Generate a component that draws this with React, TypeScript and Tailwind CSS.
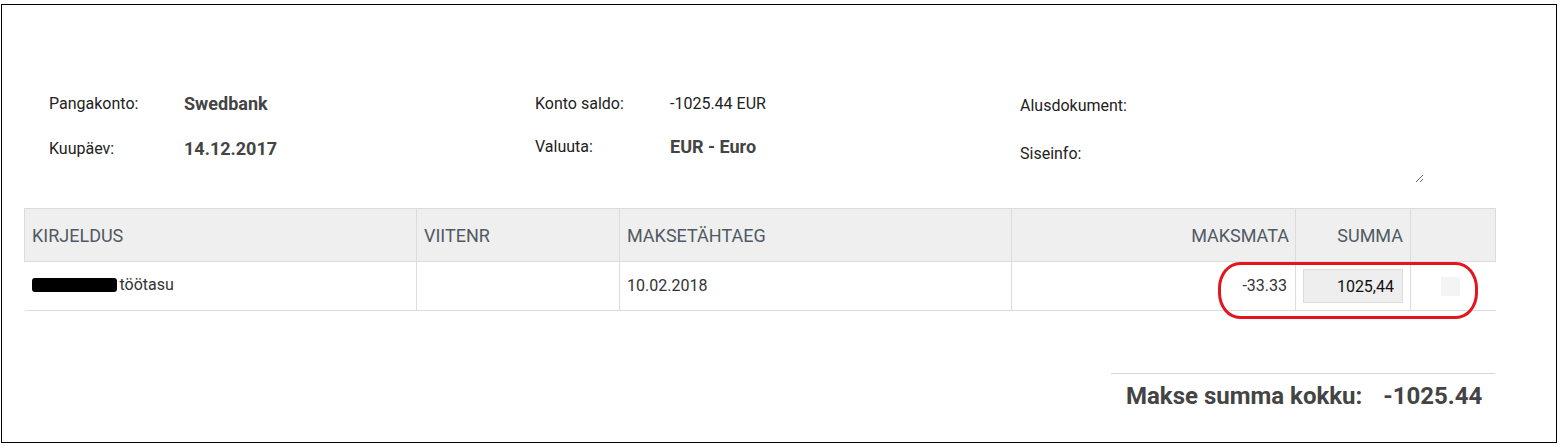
import React from "react";

const labelCls = "text-[16px] text-[#222] leading-6";

const InfoRow: React.FC<{ label: string; value?: string; light?: boolean }> = ({
  label,
  value,
  light,
}) => (
  <div className="grid grid-cols-[135px_1fr] items-center h-6">
    <span className={labelCls}>{label}</span>
    <span
      className={
        light
          ? "text-[16px] text-[#222] leading-6"
          : "text-[18px] font-bold text-[#444] leading-6"
      }
    >
      {value}
    </span>
  </div>
);

const App: React.FC = () => {
  return (
    <div className="pt-[4px] pl-[1px] bg-white font-['Roboto','Liberation_Sans',sans-serif]">
      <div className="relative w-[1556px] h-[439px] border border-black flex flex-col pt-[87px] pl-[22px]">
        {/* Info */}
        <div className="h-[116px] flex pl-[25px]">
          <div className="w-[486px] shrink-0 flex flex-col gap-[21px]">
            <InfoRow label="Pangakonto:" value="Swedbank" />
            <InfoRow label="Kuupäev:" value="14.12.2017" />
          </div>
          <div className="w-[485px] shrink-0 flex flex-col gap-[19px]">
            <InfoRow label="Konto saldo:" value="-1025.44 EUR" light />
            <InfoRow label="Valuuta:" value="EUR - Euro" />
          </div>
          <div className="w-[404px] shrink-0 flex flex-col pt-[2px]">
            <span className={labelCls}>Alusdokument:</span>
            <div className="flex mt-[24px]">
              <span className={labelCls}>Siseinfo:</span>
              <textarea
                className="ml-auto w-[300px] h-[41px] border-0 outline-none resize bg-transparent"
                defaultValue=""
              />
            </div>
          </div>
        </div>

        {/* Table */}
        <table className="w-[1471px] border-collapse table-fixed">
          <colgroup>
            <col className="w-[392px]" />
            <col className="w-[203px]" />
            <col className="w-[392px]" />
            <col className="w-[284px]" />
            <col className="w-[115px]" />
            <col className="w-[85px]" />
          </colgroup>
          <thead>
            <tr className="h-[53px] bg-[#efefef] text-[18px] text-[#4f5a63]">
              <th className="border border-[#dcdcdc] text-left font-normal pl-[7px]">KIRJELDUS</th>
              <th className="border border-[#dcdcdc] text-left font-normal pl-[7px]">VIITENR</th>
              <th className="border border-[#dcdcdc] text-left font-normal pl-[7px]">MAKSETÄHTAEG</th>
              <th className="border border-[#dcdcdc] text-right font-normal px-[6px]">MAKSMATA</th>
              <th className="border border-[#dcdcdc] text-right font-normal px-[7px]">SUMMA</th>
              <th className="border border-[#dcdcdc]"></th>
            </tr>
          </thead>
          <tbody>
            <tr className="h-[49px] text-[16px] text-[#333]">
              <td className="border border-[#dcdcdc] border-l-0 pl-[7px]">
                <span className="inline-flex items-center gap-[3px]">
                  <span className="inline-block w-[85px] h-[14px] bg-black rounded-[3px]" />
                  <span>töötasu</span>
                </span>
              </td>
              <td className="border border-[#dcdcdc]"></td>
              <td className="border border-[#dcdcdc] pl-[7px]">10.02.2018</td>
              <td className="border border-[#dcdcdc] text-right px-2">-33.33</td>
              <td className="border border-[#dcdcdc] px-[7px]">
                <input
                  readOnly
                  value="1025,44"
                  className="w-[100px] h-[34px] bg-[#eeeeee] border border-[#dddddd] text-right pr-[8px] text-[16px] text-[#111] outline-none"
                />
              </td>
              <td className="border border-[#dcdcdc] border-r-0">
                <div className="ml-[30px] w-[19px] h-[19px] bg-[#f4f4f4]" />
              </td>
            </tr>
          </tbody>
        </table>

        {/* Total */}
        <div className="flex justify-end w-[1471px] mt-[62px]">
          <div className="w-[384px] border-t border-[#d6d6d6] pt-[10px] pl-[15px] flex gap-[21px] text-[24px] font-bold text-[#444] leading-6">
            <span>Makse summa kokku:</span>
            <span>-1025.44</span>
          </div>
        </div>

        {/* annotation */}
        <div className="absolute left-[1216px] top-[257px] w-[260px] h-[57px] border-[3px] border-[#e3161f] rounded-[22px/26px] pointer-events-none" />
      </div>
    </div>
  );
};

export default App;
